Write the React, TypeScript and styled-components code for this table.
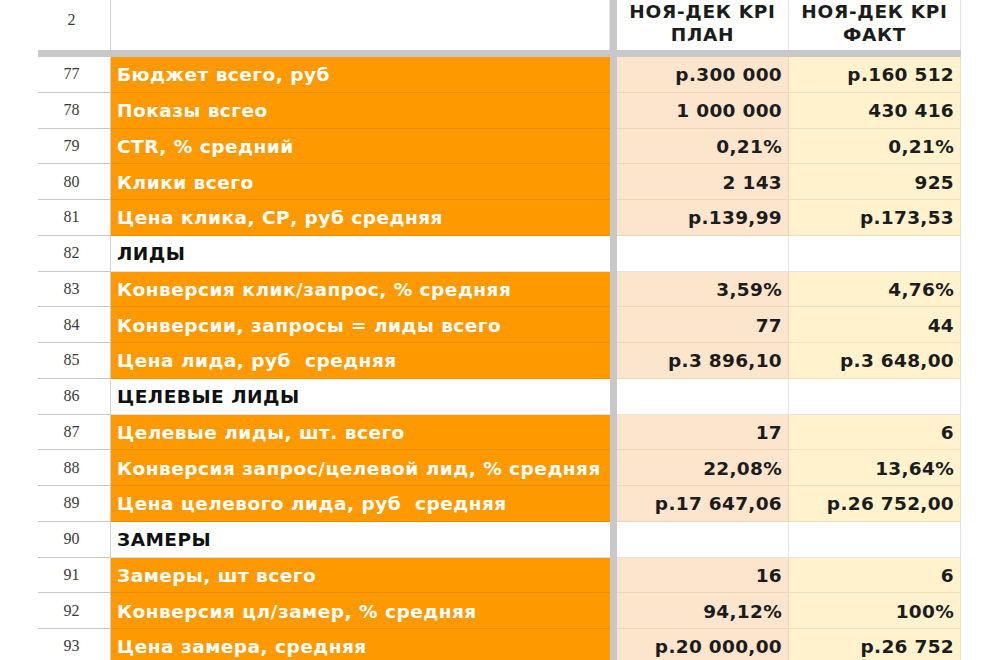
import styled, { createGlobalStyle } from "styled-components";

type Kind = "metric" | "section";

interface Row {
  n: number;
  label: string;
  kind: Kind;
  plan?: string;
  fact?: string;
}

const rows: Row[] = [
  { n: 77, label: "Бюджет всего, руб", kind: "metric", plan: "р.300 000", fact: "р.160 512" },
  { n: 78, label: "Показы всгео", kind: "metric", plan: "1 000 000", fact: "430 416" },
  { n: 79, label: "CTR, % средний", kind: "metric", plan: "0,21%", fact: "0,21%" },
  { n: 80, label: "Клики всего", kind: "metric", plan: "2 143", fact: "925" },
  { n: 81, label: "Цена клика, СР, руб средняя", kind: "metric", plan: "р.139,99", fact: "р.173,53" },
  { n: 82, label: "ЛИДЫ", kind: "section" },
  { n: 83, label: "Конверсия клик/запрос, % средняя", kind: "metric", plan: "3,59%", fact: "4,76%" },
  { n: 84, label: "Конверсии, запросы = лиды всего", kind: "metric", plan: "77", fact: "44" },
  { n: 85, label: "Цена лида, руб  средняя", kind: "metric", plan: "р.3 896,10", fact: "р.3 648,00" },
  { n: 86, label: "ЦЕЛЕВЫЕ ЛИДЫ", kind: "section" },
  { n: 87, label: "Целевые лиды, шт. всего", kind: "metric", plan: "17", fact: "6" },
  { n: 88, label: "Конверсия запрос/целевой лид, % средняя", kind: "metric", plan: "22,08%", fact: "13,64%" },
  { n: 89, label: "Цена целевого лида, руб  средняя", kind: "metric", plan: "р.17 647,06", fact: "р.26 752,00" },
  { n: 90, label: "ЗАМЕРЫ", kind: "section" },
  { n: 91, label: "Замеры, шт всего", kind: "metric", plan: "16", fact: "6" },
  { n: 92, label: "Конверсия цл/замер, % средняя", kind: "metric", plan: "94,12%", fact: "100%" },
  { n: 93, label: "Цена замера, средняя", kind: "metric", plan: "р.20 000,00", fact: "р.26 752" },
];

export default function App() {
  return (
    <>
      <GlobalStyle />
      <SPage>
        <SSheet>
          <SRowNum $header>2</SRowNum>
          <SHeadCell />
          <SFreezeV />
          <SHeadCell>
            НОЯ-ДЕК KPI
            <br />
            ПЛАН
          </SHeadCell>
          <SHeadCell>
            НОЯ-ДЕК KPI
            <br />
            ФАКТ
          </SHeadCell>

          <SFreezeH />

          {rows.map((r) => (
            <SRowGroup key={r.n}>
              <SRowNum>{r.n}</SRowNum>
              <SLabel $kind={r.kind}>{r.label}</SLabel>
              <SFreezeV />
              <SValue $tone="plan" $kind={r.kind}>
                {r.plan}
              </SValue>
              <SValue $tone="fact" $kind={r.kind}>
                {r.fact}
              </SValue>
            </SRowGroup>
          ))}
        </SSheet>
      </SPage>
    </>
  );
}

const GlobalStyle = createGlobalStyle`
  html, body {
    margin: 0;
    padding: 0;
    background: #ffffff;
    overflow: hidden;
  }
  body {
    font-family: "DejaVu Sans", "Noto Sans", sans-serif;
  }
`;

const SPage = styled.div`
  width: 1000px;
  height: 660px;
  overflow: hidden;
  padding-left: 38px;
  box-sizing: border-box;
`;

const SSheet = styled.div`
  display: grid;
  grid-template-columns: 73px 499px 7px 172px 172px;
  grid-template-rows: 50px 7px;
  grid-auto-rows: 35.75px;
  width: 923px;
`;

const SRowGroup = styled.div`
  display: contents;
`;

const SRowNum = styled.div<{ $header?: boolean }>`
  display: flex;
  align-items: center;
  justify-content: center;
  box-sizing: border-box;
  padding: ${(p) => (p.$header ? "0 5px 10px 0" : "0 5px 0 0")};
  border-right: 1px solid #cfcfcf;
  border-bottom: ${(p) => (p.$header ? "none" : "1px solid #c6c6c6")};
  font-family: "Liberation Serif", serif;
  font-size: 16px;
  color: #3a3a3a;
`;

const SHeadCell = styled.div`
  display: flex;
  align-items: center;
  justify-content: center;
  box-sizing: border-box;
  padding-bottom: 5px;
  border-right: 1px solid #e4e4e4;
  text-align: center;
  font-weight: 700;
  font-size: 18.5px;
  letter-spacing: 0.7px;
  line-height: 23px;
  color: #1c1c1c;
  background: #ffffff;
`;

const SFreezeV = styled.div`
  background: #c8c8c8;
`;

const SFreezeH = styled.div`
  grid-column: 1 / -1;
  background: #c8c8c8;
`;

const SLabel = styled.div<{ $kind: Kind }>`
  display: flex;
  align-items: center;
  box-sizing: border-box;
  padding: 1px 0 0 6px;
  white-space: pre;
  font-weight: 700;
  font-size: 18.5px;
  letter-spacing: 0.5px;
  background: ${(p) => (p.$kind === "metric" ? "#ff9900" : "#ffffff")};
  color: ${(p) => (p.$kind === "metric" ? "#ffffff" : "#111111")};
  border-bottom: 1px solid
    ${(p) => (p.$kind === "metric" ? "#ea8d08" : "#e2e2e2")};
`;

const toneBg = { plan: "#fce5cd", fact: "#fff2cc" };
const toneLine = { plan: "#efd6bb", fact: "#f1e0b6" };

const SValue = styled.div<{ $tone: "plan" | "fact"; $kind: Kind }>`
  display: flex;
  align-items: center;
  justify-content: flex-end;
  box-sizing: border-box;
  padding: 1px 6px 0 0;
  font-weight: 700;
  font-size: 18.5px;
  letter-spacing: 0.3px;
  color: #1c1c1c;
  background: ${(p) => (p.$kind === "metric" ? toneBg[p.$tone] : "#ffffff")};
  border-right: 1px solid
    ${(p) => (p.$kind === "metric" ? toneLine[p.$tone] : "#e4e4e4")};
  border-bottom: 1px solid
    ${(p) => (p.$kind === "metric" ? toneLine[p.$tone] : "#e4e4e4")};
`;
